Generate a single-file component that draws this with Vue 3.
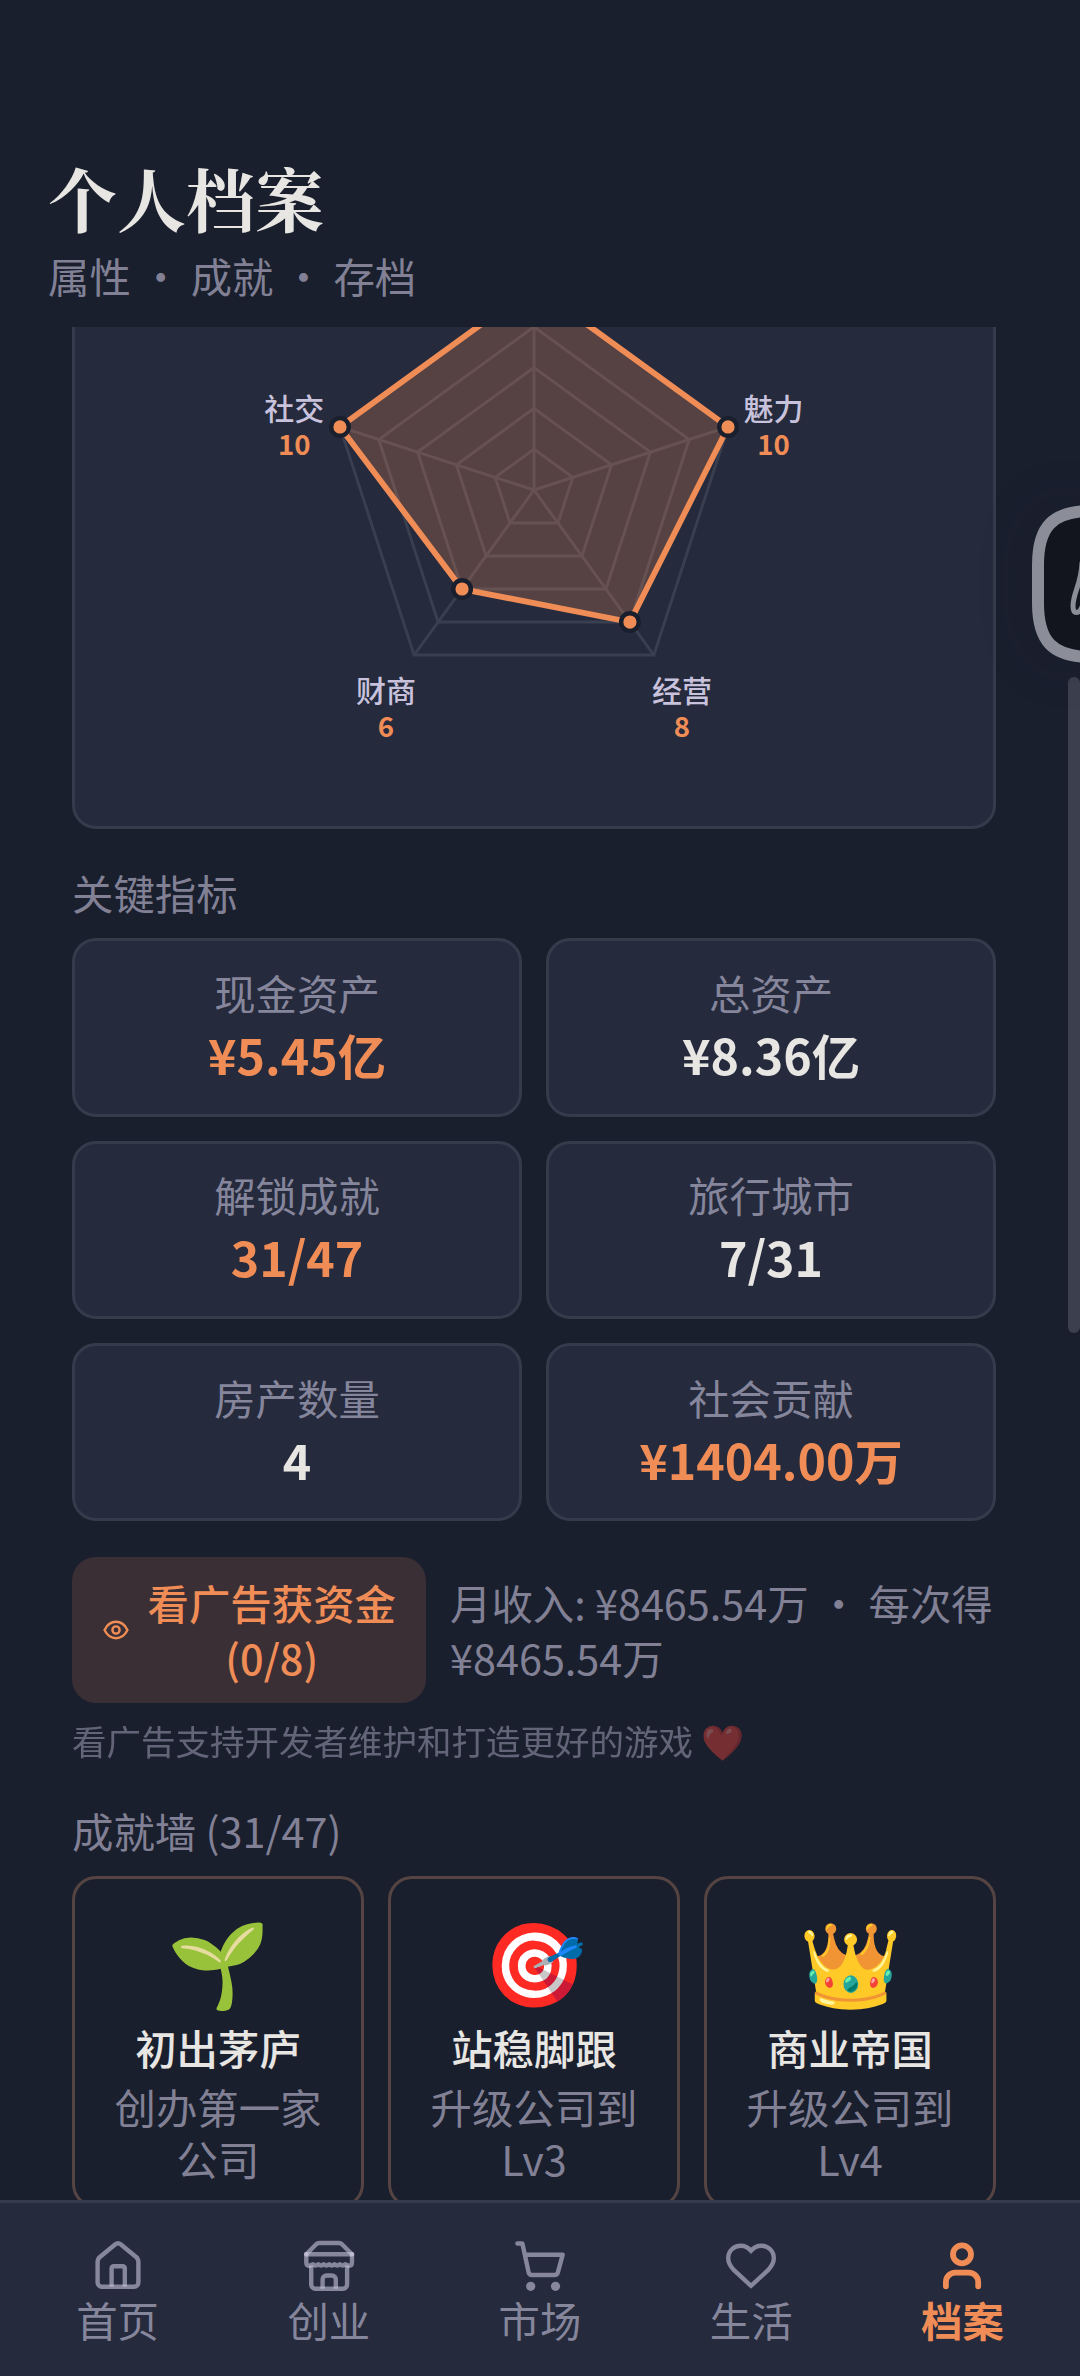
<script setup>
const metrics = [
  { label: '现金资产', value: '¥5.45亿', accent: true },
  { label: '总资产', value: '¥8.36亿' },
  { label: '解锁成就', value: '31/47', accent: true },
  { label: '旅行城市', value: '7/31' },
  { label: '房产数量', value: '4' },
  { label: '社会贡献', value: '¥1404.00万', accent: true },
]

const achievements = [
  { icon: '🌱', name: '初出茅庐', desc: '创办第一家公司' },
  { icon: '🎯', name: '站稳脚跟', desc: '升级公司到Lv3' },
  { icon: '👑', name: '商业帝国', desc: '升级公司到Lv4' },
]

const tabs = [
  { key: 'home', label: '首页' },
  { key: 'shop', label: '创业' },
  { key: 'cart', label: '市场' },
  { key: 'life', label: '生活' },
  { key: 'user', label: '档案', active: true },
]

const cx = 459
const cy = 358
const radius = 204
const values = [10, 10, 8, 6, 10]
const point = (i, k) => {
  const a = (Math.PI * 2 * i) / 5 - Math.PI / 2
  return [cx + Math.cos(a) * radius * k, cy + Math.sin(a) * radius * k]
}
const ring = (k) => [0, 1, 2, 3, 4].map((i) => point(i, k).join(',')).join(' ')
const rings = [0.2, 0.4, 0.6, 0.8, 1].map(ring)
const axes = [0, 1, 2, 3, 4].map((i) => point(i, 1))
const dots = values.map((v, i) => point(i, v / 10))
const area = dots.map((p) => p.join(',')).join(' ')
const labels = [
  { name: '魅力', value: 10, x: 698.5, y: 288 },
  { name: '经营', value: 8, x: 607, y: 570 },
  { name: '财商', value: 6, x: 311, y: 570 },
  { name: '社交', value: 10, x: 219.3, y: 288 },
]
</script>

<template>
  <div class="app">
    <header class="header">
      <h1>个人档案</h1>
      <p>属性 • 成就 • 存档</p>
    </header>

    <main class="scroll">
      <section class="chart-card">
        <svg viewBox="0 0 918 694" width="918" height="694">
          <polygon v-for="(r, i) in rings" :key="i" :points="r" class="grid-line" />
          <line v-for="(a, i) in axes" :key="'a' + i" :x1="cx" :y1="cy" :x2="a[0]" :y2="a[1]" class="grid-line" />
          <polygon :points="area" class="area" />
          <circle v-for="(d, i) in dots" :key="'d' + i" :cx="d[0]" :cy="d[1]" r="8.8" class="dot" />
          <template v-for="l in labels" :key="l.name">
            <text :x="l.x" :y="l.y" class="axis-name">{{ l.name }}</text>
            <text :x="l.x" :y="l.y + 35" class="axis-value">{{ l.value }}</text>
          </template>
        </svg>
      </section>

      <h2 class="section-title">关键指标</h2>
      <section class="metrics">
        <div v-for="m in metrics" :key="m.label" class="metric">
          <span class="metric-label">{{ m.label }}</span>
          <strong class="metric-value" :class="{ accent: m.accent }">{{ m.value }}</strong>
        </div>
      </section>

      <section class="ad-row">
        <button class="ad-button">
          <svg viewBox="0 0 30 30" width="30" height="30" fill="none" stroke="currentColor" stroke-width="2.4">
            <path d="M3.5 15C6.2 9.5 10.2 6.8 15 6.8S23.8 9.5 26.5 15C23.8 20.5 19.8 23.2 15 23.2S6.2 20.5 3.5 15Z" stroke-linejoin="round" />
            <circle cx="15" cy="15" r="3.6" />
          </svg>
          <span>看广告获资金 (0/8)</span>
        </button>
        <p>月收入: ¥8465.54万 • 每次得 ¥8465.54万</p>
      </section>
      <p class="footnote">看广告支持开发者维护和打造更好的游戏 ❤️</p>

      <h2 class="section-title wall-title">成就墙 (31/47)</h2>
      <section class="wall">
        <article v-for="a in achievements" :key="a.name" class="badge">
          <div class="emoji">{{ a.icon }}</div>
          <h3>{{ a.name }}</h3>
          <p>{{ a.desc }}</p>
        </article>
      </section>
    </main>

    <nav class="tabs">
      <a v-for="t in tabs" :key="t.key" class="tab" :class="{ active: t.active }">
        <svg viewBox="0 0 56 56" width="56" height="56" fill="none" stroke="currentColor" stroke-width="4.4" stroke-linecap="round" stroke-linejoin="round">
          <template v-if="t.key === 'home'">
            <path d="M7.6 25V45.5a4.2 4.2 0 0 0 4.2 4.2H44.2a4.2 4.2 0 0 0 4.2-4.2V25c0-2.3-.7-3.7-2.3-5L30.6 7.2q-2.6-2-5.2 0L9.9 20C8.3 21.3 7.6 22.7 7.6 25Z" />
            <path d="M21.6 49.7V31.2a2 2 0 0 1 2-2h9.2a2 2 0 0 1 2 2V49.7" stroke-linecap="butt" />
          </template>
          <template v-else-if="t.key === 'shop'">
            <path d="M5.3 17.3L15.2 7.2q1.2-1.2 3-1.2H38q1.8 0 3 1.2L51 17.3" />
            <path d="M5.3 17.3H51" />
            <path d="M5.3 17.3V25.5q0 3.3 3.6 3.3L12 27.2q2.5 2.6 5.3 0q2.7 2.6 5.4 0q2.7 2.6 5.4 0q2.7 2.6 5.4 0q2.7 2.6 5.4 0q2.7 2.6 5.4 0L47.4 28.8q3.6 0 3.6-3.3V17.3" />
            <path d="M10.2 28.5V47.5a4.2 4.2 0 0 0 4.2 4.2H41.9a4.2 4.2 0 0 0 4.2-4.2V28.5" stroke-linecap="butt" />
            <path d="M21.6 51.7V42.5a4 4 0 0 1 4-4h5.2a4 4 0 0 1 4 4V51.7" stroke-linecap="butt" />
          </template>
          <template v-else-if="t.key === 'cart'">
            <path d="M5.4 6.5H10.4L16.6 35.3q.6 2.7 3.3 2.7H42.6q2.7 0 3.3-2.7L50.7 17.7H13" />
            <circle cx="18.7" cy="49.3" r="4.6" fill="currentColor" stroke="none" />
            <circle cx="43.5" cy="49.3" r="4.6" fill="currentColor" stroke="none" />
          </template>
          <path v-else-if="t.key === 'life'" stroke-linejoin="miter" d="M28 13.7C24.8 10 21.5 8.7 17.8 8.7C10.8 8.7 5.2 14 5.2 21.3C5.2 26.5 7.5 29.5 11 33.2L28 48.8L45 33.2C48.5 29.5 50.8 26.5 50.8 21.3C50.8 14 45.2 8.7 38.2 8.7C34.5 8.7 31.2 10 28 13.7Z" />
          <template v-else>
            <circle cx="28" cy="17.3" r="9" stroke-width="5.8" />
            <path d="M11.9 49.3V45a9.3 9.3 0 0 1 9.3-9.3H34.9a9.3 9.3 0 0 1 9.3 9.3V49.3" stroke-width="5.8" />
          </template>
        </svg>
        <span>{{ t.label }}</span>
      </a>
    </nav>

    <div class="scrollbar"></div>
    <svg class="assist" viewBox="0 0 48 158" width="48" height="158">
      <path class="assist-frame" d="M90 6H60C20 6 6 22 6 60V98C6 136 20 152 60 152H90" />
      <path class="assist-pen" d="M50 58C49 80 41 88 41 101C41 110 47 109 50 102" />
    </svg>
  </div>
</template>

<style>
body {
  background: #1a1f2e;
}
</style>

<style scoped>
.app {
  --bg: #1a1f2e;
  --card: #252a3d;
  --line: #363b4b;
  --muted: rgba(200, 196, 220, 0.6);
  --text: #e8e6e3;
  --accent: #f08d56;
  position: relative;
  display: flex;
  flex-direction: column;
  width: 1080px;
  height: 2376px;
  overflow: hidden;
  background: var(--bg);
  color: var(--text);
  font-family: "Noto Sans CJK SC", sans-serif;
  font-size: 41.4px;
}

h1, h2, h3, p {
  margin: 0;
  font-weight: 400;
}

.header {
  flex: none;
  box-sizing: border-box;
  height: 327px;
  padding: 158px 48px 0;
}

.header h1 {
  font-family: "Noto Serif CJK SC", "Noto Serif SC", "Source Han Serif SC", "Noto Sans CJK SC", serif;
  font-size: 69px;
  font-weight: 700;
  line-height: 80px;
}

.header p {
  margin-top: 8px;
  line-height: 58px;
  color: var(--muted);
}

.scroll {
  flex: 1;
  min-height: 0;
  overflow: hidden;
  padding: 0 84px 0 72px;
}

.chart-card {
  box-sizing: border-box;
  height: 700px;
  margin-top: -198px;
  background: var(--card);
  border: 3px solid var(--line);
  border-radius: 24px;
}

.chart-card svg {
  display: block;
}

.grid-line {
  fill: none;
  stroke: #3a3f50;
  stroke-width: 2.9;
}

.area {
  fill: rgba(240, 141, 86, 0.25);
  stroke: var(--accent);
  stroke-width: 5.8;
}

.dot {
  fill: var(--accent);
  stroke: var(--bg);
  stroke-width: 4.4;
}

.axis-name,
.axis-value {
  text-anchor: middle;
  font-weight: 500;
  font-size: 30px;
  fill: #c8c2dc;
}

.axis-value {
  font-size: 27.6px;
  font-weight: 600;
  fill: var(--accent);
}

.section-title {
  margin: 33px 0 16.4px;
  font-size: 41.4px;
  line-height: 60px;
  color: var(--muted);
}

.metrics {
  display: grid;
  grid-template-columns: 1fr 1fr;
  gap: 24px;
}

.metric {
  box-sizing: border-box;
  display: flex;
  flex-direction: column;
  align-items: center;
  height: 178.3px;
  padding-top: 20.7px;
  background: var(--card);
  border: 3px solid var(--line);
  border-radius: 24px;
}

.metric-label {
  line-height: 60px;
  color: var(--muted);
}

.metric-value {
  font-size: 48.3px;
  font-weight: 700;
  line-height: 65px;
}

.metric-value.accent {
  color: var(--accent);
}

.ad-row {
  display: flex;
  align-items: center;
  gap: 24px;
  margin-top: 35.8px;
  line-height: 55.4px;
  color: var(--muted);
}

.ad-row p {
  flex: 1;
}

.ad-button {
  flex: none;
  box-sizing: border-box;
  display: flex;
  align-items: center;
  gap: 16px;
  width: 354px;
  height: 145.7px;
  padding: 0 29px 0 28.5px;
  border: 0;
  border-radius: 24px;
  background: #3b2f36;
  color: var(--accent);
  font: inherit;
  font-weight: 500;
  text-align: center;
}

.ad-button svg {
  flex: none;
}

.ad-button span {
  flex: 1;
}

.footnote {
  margin-top: 14.5px;
  font-size: 34.5px;
  line-height: 46px;
  color: var(--muted);
  opacity: 0.7;
}

.wall-title {
  margin: 36.5px 0 16.3px;
}

.wall {
  display: grid;
  grid-template-columns: repeat(3, 1fr);
  gap: 24px;
}

.badge {
  box-sizing: border-box;
  display: flex;
  flex-direction: column;
  align-items: center;
  height: 332px;
  padding: 33px 24px 0;
  border: 3px solid #554441;
  border-radius: 24px;
  text-align: center;
}

.emoji {
  height: 92px;
  margin-bottom: 13.5px;
  font-size: 82.8px;
  line-height: 92px;
}

.badge h3 {
  font-size: 41.4px;
  font-weight: 500;
  line-height: 58px;
}

.badge p {
  margin-top: 4px;
  line-height: 52px;
  color: var(--muted);
}

.tabs {
  flex: none;
  box-sizing: border-box;
  display: flex;
  height: 176px;
  padding: 34px 12px 0;
  background: var(--card);
  border-top: 3px solid var(--line);
}

.tab {
  flex: 1;
  display: flex;
  flex-direction: column;
  align-items: center;
  color: var(--muted);
}

.tab span {
  line-height: 52px;
}

.tab.active {
  color: var(--accent);
  font-weight: 700;
}

.scrollbar {
  position: absolute;
  top: 677px;
  right: 0;
  width: 12px;
  height: 656px;
  border-radius: 6px;
  background: #3c3f4d;
}

.assist {
  position: absolute;
  top: 505px;
  right: 0;
  filter: drop-shadow(0 0 24px rgba(20, 20, 30, 0.25));
}

.assist-frame {
  fill: #12151d;
  stroke: #8b8e98;
  stroke-width: 12;
}

.assist-pen {
  fill: none;
  stroke: #8b8e98;
  stroke-width: 5;
  stroke-linecap: round;
}
</style>
